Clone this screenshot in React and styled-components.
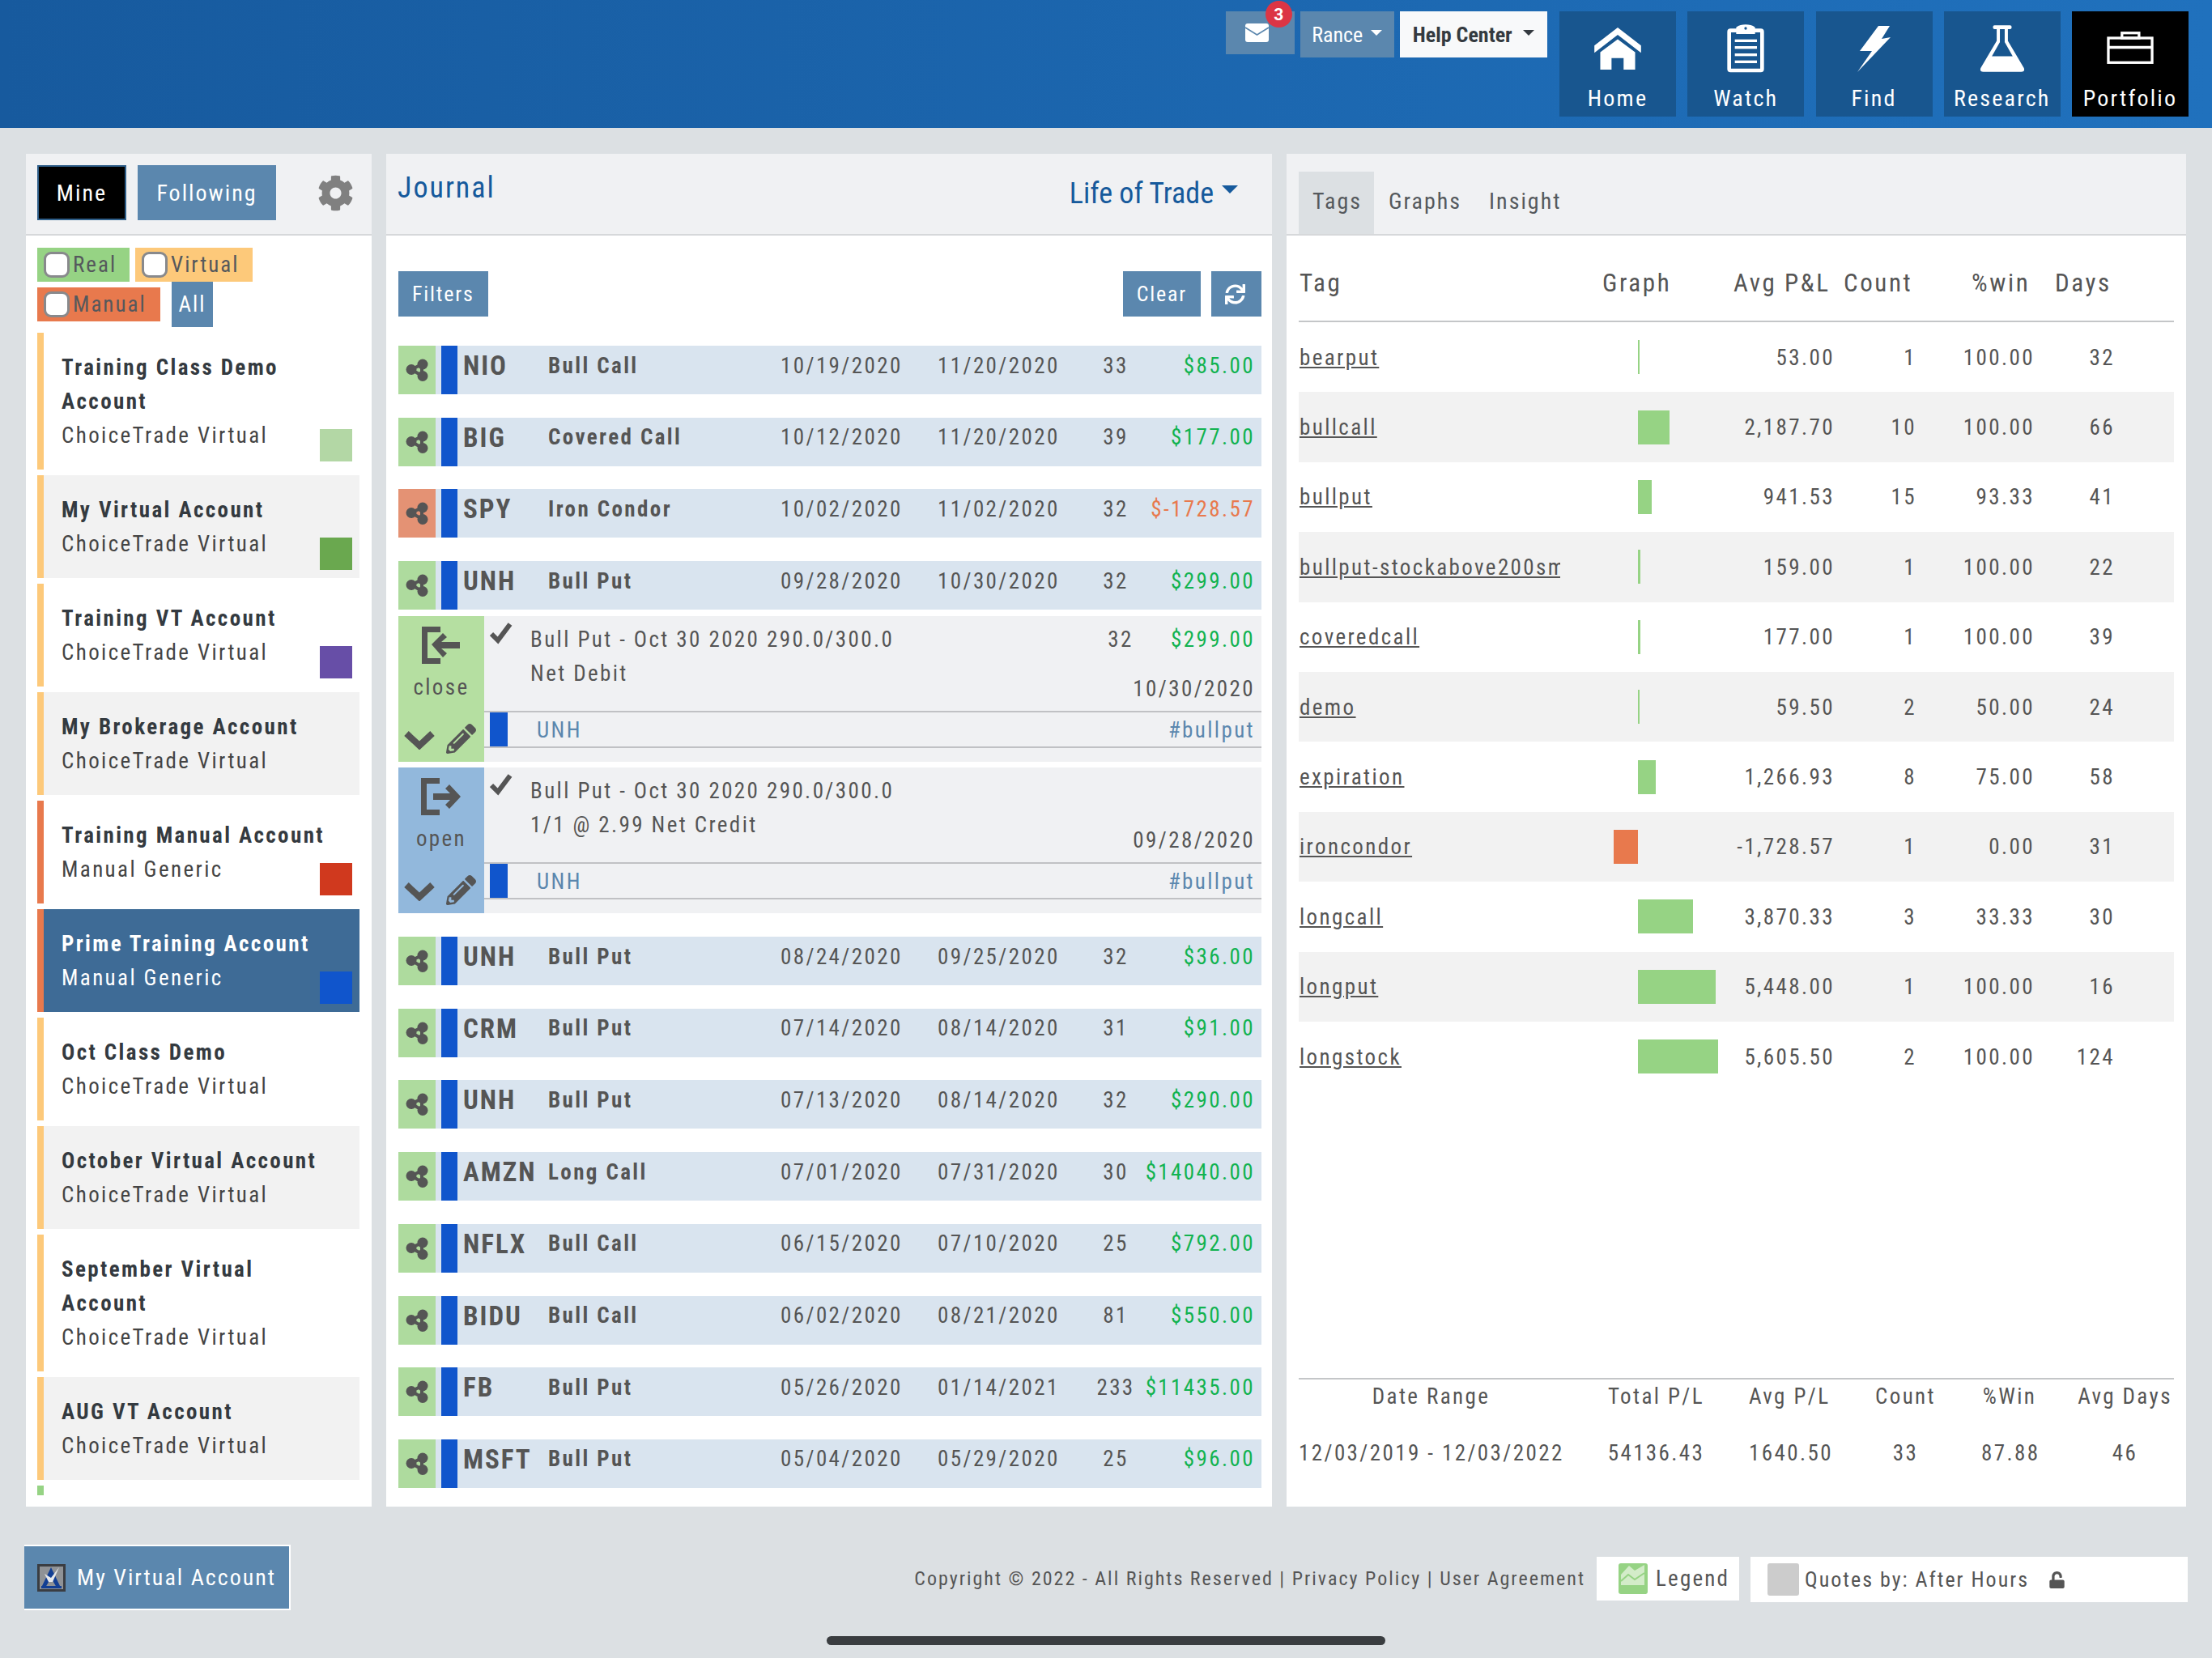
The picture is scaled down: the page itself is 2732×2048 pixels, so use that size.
import React from 'react';
import styled, { createGlobalStyle } from 'styled-components';
import { FaCog, FaPencilAlt, FaSync, FaUnlock } from 'react-icons/fa';

const GlobalStyle = createGlobalStyle`
	html, body { margin: 0; padding: 0; background: #dce0e3; }
	body {
		font-family: "Roboto Condensed", "Liberation Sans Narrow", Roboto, sans-serif;
		font-stretch: condensed;
		letter-spacing: 2.4px;
		color: #555;
	}
	* { box-sizing: border-box; }
`;

const accounts = [
	{ name: 'Training Class Demo Account', sub: 'ChoiceTrade Virtual', swatch: '#b3d7a5' },
	{ name: 'My Virtual Account', sub: 'ChoiceTrade Virtual', swatch: '#6aa84f' },
	{ name: 'Training VT Account', sub: 'ChoiceTrade Virtual', swatch: '#674ea7' },
	{ name: 'My Brokerage Account', sub: 'ChoiceTrade Virtual' },
	{ name: 'Training Manual Account', sub: 'Manual Generic', swatch: '#d0391e', kind: 'manual' },
	{ name: 'Prime Training Account', sub: 'Manual Generic', swatch: '#1055cc', kind: 'manual', active: true },
	{ name: 'Oct Class Demo', sub: 'ChoiceTrade Virtual' },
	{ name: 'October Virtual Account', sub: 'ChoiceTrade Virtual' },
	{ name: 'September Virtual Account', sub: 'ChoiceTrade Virtual' },
	{ name: 'AUG VT Account', sub: 'ChoiceTrade Virtual' },
];

const trades = [
	['NIO', 'Bull Call', '10/19/2020', '11/20/2020', '33', '$85.00'],
	['BIG', 'Covered Call', '10/12/2020', '11/20/2020', '39', '$177.00'],
	['SPY', 'Iron Condor', '10/02/2020', '11/02/2020', '32', '$-1728.57'],
	['UNH', 'Bull Put', '09/28/2020', '10/30/2020', '32', '$299.00', true],
];

const moreTrades = [
	['UNH', 'Bull Put', '08/24/2020', '09/25/2020', '32', '$36.00'],
	['CRM', 'Bull Put', '07/14/2020', '08/14/2020', '31', '$91.00'],
	['UNH', 'Bull Put', '07/13/2020', '08/14/2020', '32', '$290.00'],
	['AMZN', 'Long Call', '07/01/2020', '07/31/2020', '30', '$14040.00'],
	['NFLX', 'Bull Call', '06/15/2020', '07/10/2020', '25', '$792.00'],
	['BIDU', 'Bull Call', '06/02/2020', '08/21/2020', '81', '$550.00'],
	['FB', 'Bull Put', '05/26/2020', '01/14/2021', '233', '$11435.00'],
	['MSFT', 'Bull Put', '05/04/2020', '05/29/2020', '25', '$96.00'],
];

const tags = [
	['bearput', 53, '53.00', '1', '100.00', '32'],
	['bullcall', 2187.7, '2,187.70', '10', '100.00', '66'],
	['bullput', 941.53, '941.53', '15', '93.33', '41'],
	['bullput-stockabove200sma', 159, '159.00', '1', '100.00', '22'],
	['coveredcall', 177, '177.00', '1', '100.00', '39'],
	['demo', 59.5, '59.50', '2', '50.00', '24'],
	['expiration', 1266.93, '1,266.93', '8', '75.00', '58'],
	['ironcondor', -1728.57, '-1,728.57', '1', '0.00', '31'],
	['longcall', 3870.33, '3,870.33', '3', '33.33', '30'],
	['longput', 5448, '5,448.00', '1', '100.00', '16'],
	['longstock', 5605.5, '5,605.50', '2', '100.00', '124'],
];

const HomeIcon = () => (
	<svg width="58" height="52" viewBox="141 68 174 157" fill="#fff">
		<path d="M228 68 L315 135 L315 162 L228 95 L141 162 L141 135 Z" />
		<path d="M228 112 L293 160 L293 225 L250 225 L250 182 L205 182 L205 225 L163 225 L163 160 Z" />
	</svg>
);

const WatchIcon = () => (
	<svg width="46" height="60" viewBox="636 60 138 178" fill="#fff">
		<rect x="644" y="82" width="122" height="148" rx="5" fill="none" stroke="#fff" strokeWidth="14" />
		<path d="M670 95 L670 70 Q685 60 705 60 Q725 60 740 70 L740 95 Z" />
		<circle cx="705" cy="74" r="5" fill="#18568f" />
		<rect x="665" y="115" width="82" height="10" />
		<rect x="665" y="140" width="82" height="10" />
		<rect x="665" y="167" width="82" height="10" />
		<rect x="665" y="193" width="82" height="10" />
	</svg>
);

const FindIcon = () => (
	<svg width="44" height="58" viewBox="2292 30 44 58" fill="#fff">
		<path d="M2319 31 L2333 31 L2323 47 L2334 45 L2293 88 L2311 62 L2296 62 Z" />
	</svg>
);

const ResearchIcon = () => (
	<svg width="56" height="60" viewBox="368 60 170 178" fill="#fff">
		<rect x="418" y="62" width="70" height="14" rx="6" />
		<path
			fillRule="evenodd"
			d="M432 76 L432 120 L372 222 Q367 236 382 236 L524 236 Q539 236 534 222 L474 120 L474 76 Z M444 76 L444 125 L414 178 L492 178 L462 125 L462 76 Z"
		/>
	</svg>
);

const PortfolioIcon = () => (
	<svg width="58" height="41" viewBox="842 84 176 122" fill="none" stroke="#fff" strokeWidth="10">
		<rect x="848" y="107" width="164" height="92" />
		<rect x="899" y="88" width="64" height="19" />
		<path d="M848 142 H1012" />
	</svg>
);

const MailIcon = () => (
	<svg width="29" height="23" viewBox="0 0 29 23">
		<rect width="29" height="23" rx="3" fill="#fff" />
		<path d="M0 5 L14.5 14 L29 5" fill="none" stroke="#5b87ae" strokeWidth="1.6" />
	</svg>
);

const ShareIcon = () => (
	<svg width="28" height="28" viewBox="0 0 28 28" fill="#555">
		<path d="M7 13.5 L20 7 L20 21 Z" fill="none" stroke="#555" strokeWidth="4" />
		<circle cx="7" cy="13.5" r="6.5" />
		<circle cx="21" cy="7" r="6.5" />
		<circle cx="21" cy="21.5" r="6.5" />
	</svg>
);

const EnterIcon = () => (
	<svg width="48" height="46" viewBox="0 0 48 46" fill="#555">
		<path d="M0 0 H23 V7 H7 V39 H23 V46 H0 Z" />
		<path d="M12 22 L26 8 L31 13 L24 19 H47 V27 H24 L31 33 L26 38 Z" />
	</svg>
);

const ExitIcon = () => (
	<svg width="50" height="46" viewBox="0 0 50 46" fill="#555">
		<path d="M0 0 H23 V7 H7 V39 H23 V46 H0 Z" />
		<path d="M49 23 L35 8 L30 13 L36 19 H15 V27 H36 L30 33 L35 38 Z" />
	</svg>
);

const CheckIcon = () => (
	<svg width="28" height="28" viewBox="0 0 28 28" fill="none" stroke="#555" strokeWidth="6">
		<path d="M2 15 L10 23 L25 3" />
	</svg>
);

const ChevronIcon = () => (
	<svg width="38" height="26" viewBox="0 0 38 26" fill="none" stroke="#555" strokeWidth="8">
		<path d="M3 6 L19 21 L35 6" />
	</svg>
);

const LegendIcon = () => (
	<svg width="36" height="38" viewBox="0 0 36 38">
		<rect width="36" height="38" rx="3" fill="#96d384" />
		<path d="M3 14 L13 3 L20 9 L32 2 V27 H3 Z" fill="#d3ecc9" />
		<path d="M3 22 L12 14 L20 20 L32 12" fill="none" stroke="#96d384" strokeWidth="2" />
	</svg>
);

const LogoIcon = () => (
	<svg width="35" height="34" viewBox="0 0 35 34">
		<rect width="35" height="34" fill="#3a3d42" />
		<rect x="3" y="3" width="29" height="28" fill="#8f9296" />
		<path d="M17 4 L29 29 L24 29 L17 17 L10 29 L5 29 Z" fill="#123f94" />
		<path d="M9 12 L17 17 L27 4 L19 22 L14 22 Z" fill="#e6e8ea" />
		<rect x="5" y="27" width="25" height="3" fill="#123f94" />
	</svg>
);

const App = () => {
	const renderTrade = (t) => (
		<TradeRow key={t[0] + t[2]} $open={t[6]}>
			<StatusCell $loss={t[5].includes('-')}><ShareIcon /></StatusCell>
			<BlueBar />
			<Ticker>{t[0]}</Ticker>
			<Strategy>{t[1]}</Strategy>
			<DateCell>{t[2]}</DateCell>
			<DateCell>{t[3]}</DateCell>
			<DaysCell>{t[4]}</DaysCell>
			<Amount $loss={t[5].includes('-')}>{t[5]}</Amount>
		</TradeRow>
	);

	return (
		<>
			<GlobalStyle />
			<Page>
				<Header>
					<TopButtons>
						<MailButton>
							<MailIcon />
							<Badge>3</Badge>
						</MailButton>
						<UserButton>Rance<Caret /></UserButton>
						<HelpButton>Help Center<HelpCaret /></HelpButton>
					</TopButtons>
					<NavTile><TileIcon><HomeIcon /></TileIcon>Home</NavTile>
					<NavTile><TileIcon><WatchIcon /></TileIcon>Watch</NavTile>
					<NavTile><TileIcon><FindIcon /></TileIcon>Find</NavTile>
					<NavTile><TileIcon><ResearchIcon /></TileIcon>Research</NavTile>
					<NavTile $active><TileIcon><PortfolioIcon /></TileIcon>Portfolio</NavTile>
				</Header>

				<Main>
					<Panel>
						<PanelHead $left>
							<MineButton>Mine</MineButton>
							<FollowButton>Following</FollowButton>
							<GearSlot><FaCog /></GearSlot>
						</PanelHead>
						<Filters>
							<FilterRow>
								<Chip $bg="#96d384" $w={114}><Box />Real</Chip>
								<Chip $bg="#fdc97a" $w={145}><Box />Virtual</Chip>
							</FilterRow>
							<FilterRow $second>
								<Chip $bg="#e8794d" $w={152}><Box />Manual</Chip>
								<AllChip>All</AllChip>
							</FilterRow>
						</Filters>
						<AccountList>
							{accounts.map((a) => (
								<AccountCard key={a.name} $kind={a.kind} $active={a.active}>
									<AccountName $active={a.active}>{a.name}</AccountName>
									<div>{a.sub}</div>
									{a.swatch && <Swatch $bg={a.swatch} />}
								</AccountCard>
							))}
							<AccountStub />
						</AccountList>
					</Panel>

					<Panel>
						<PanelHead>
							<JournalTitle>Journal</JournalTitle>
							<LifeMenu>Life of Trade<LifeCaret /></LifeMenu>
						</PanelHead>
						<Toolbar>
							<BlueButton>Filters</BlueButton>
							<ToolbarRight>
								<BlueButton>Clear</BlueButton>
								<RefreshButton><FaSync /></RefreshButton>
							</ToolbarRight>
						</Toolbar>
						<TradeList>
							{trades.map(renderTrade)}
							<LegCard>
								<LegSide $bg="#b5dfa1">
									<EnterIcon />
									<LegLabel>close</LegLabel>
									<LegActions><ChevronIcon /><FaPencilAlt /></LegActions>
								</LegSide>
								<LegBody>
									<LegTop>
										<LegCheck><CheckIcon /></LegCheck>
										<LegLines>
											<LegLine>
												<span>Bull Put - Oct 30 2020 290.0/300.0</span>
												<LegDays>32</LegDays>
												<LegAmount>$299.00</LegAmount>
											</LegLine>
											<LegNote>
												<span>Net Debit</span>
												<LegDate>10/30/2020</LegDate>
											</LegNote>
										</LegLines>
									</LegTop>
									<LegTag>
										<LegBar />
										<LegSymbol>UNH</LegSymbol>
										<LegHash>#bullput</LegHash>
									</LegTag>
								</LegBody>
							</LegCard>
							<LegCard $last>
								<LegSide $bg="#92b8dc">
									<ExitIcon />
									<LegLabel>open</LegLabel>
									<LegActions><ChevronIcon /><FaPencilAlt /></LegActions>
								</LegSide>
								<LegBody>
									<LegTop>
										<LegCheck><CheckIcon /></LegCheck>
										<LegLines>
											<LegLine>
												<span>Bull Put - Oct 30 2020 290.0/300.0</span>
											</LegLine>
											<LegNote>
												<span>1/1 @ 2.99 Net Credit</span>
												<LegDate>09/28/2020</LegDate>
											</LegNote>
										</LegLines>
									</LegTop>
									<LegTag>
										<LegBar />
										<LegSymbol>UNH</LegSymbol>
										<LegHash>#bullput</LegHash>
									</LegTag>
								</LegBody>
							</LegCard>
							{moreTrades.map(renderTrade)}
						</TradeList>
					</Panel>

					<Panel>
						<PanelHead $tabs>
							<Tab $active>Tags</Tab>
							<Tab>Graphs</Tab>
							<Tab>Insight</Tab>
						</PanelHead>
						<TagsBody>
							<TagHead>
								<span>Tag</span>
								<span>Graph</span>
								<span>Avg P&amp;L</span>
								<span>Count</span>
								<span>%win</span>
								<span>Days</span>
							</TagHead>
							{tags.map((t) => (
								<TagRow key={t[0]}>
									<TagName>{t[0]}</TagName>
									<GraphCell>
										<NegSide>
											{t[1] < 0 && <GraphBar $loss style={{ width: -t[1] * 0.0176 }} />}
										</NegSide>
										{t[1] > 0 && <GraphBar style={{ width: Math.max(t[1] * 0.0176, 2) }} />}
									</GraphCell>
									<NumCell>{t[2]}</NumCell>
									<NumCell>{t[3]}</NumCell>
									<NumCell>{t[4]}</NumCell>
									<NumCell>{t[5]}</NumCell>
								</TagRow>
							))}
							<Summary>
								<SummaryCell>Date Range</SummaryCell>
								<SummaryCell>Total P/L</SummaryCell>
								<SummaryCell>Avg P/L</SummaryCell>
								<SummaryCell>Count</SummaryCell>
								<SummaryCell>%Win</SummaryCell>
								<SummaryLast>Avg Days</SummaryLast>
								<SummaryCell>12/03/2019 - 12/03/2022</SummaryCell>
								<SummaryCell>54136.43</SummaryCell>
								<SummaryCell>1640.50</SummaryCell>
								<SummaryCell>33</SummaryCell>
								<SummaryCell>87.88</SummaryCell>
								<SummaryLast>46</SummaryLast>
							</Summary>
						</TagsBody>
					</Panel>
				</Main>

				<Footer>
					<AccountButton><LogoIcon />My Virtual Account</AccountButton>
					<FooterRight>
						<Copyright>Copyright © 2022 - All Rights Reserved | Privacy Policy | User Agreement</Copyright>
						<LegendBox><LegendIcon />Legend</LegendBox>
						<QuotesBox>
							<GreySquare />
							<span>Quotes by: After Hours</span>
							<LockSlot><FaUnlock /></LockSlot>
						</QuotesBox>
					</FooterRight>
				</Footer>
				<HomeBar />
			</Page>
		</>
	);
};

const Page = styled.div`
	position: relative;
	width: 2732px;
	height: 2048px;
	overflow: hidden;
	background: #dce0e3;
`;

const Header = styled.header`
	height: 158px;
	padding: 14px 29px 0 0;
	display: flex;
	justify-content: flex-end;
	align-items: flex-start;
	gap: 14.25px;
	background: linear-gradient(to right, #175a9e, #2071bd);
`;

const TopButtons = styled.div`
	display: flex;
	align-items: flex-start;
	gap: 7px;
	margin-right: 1px;
`;

const MailButton = styled.div`
	position: relative;
	width: 85px;
	height: 53px;
	display: flex;
	align-items: center;
	justify-content: center;
	background: #5b87ae;
	svg {
		margin-right: 8px;
	}
`;

const Badge = styled.span`
	position: absolute;
	top: -13px;
	right: 3px;
	width: 33px;
	height: 33px;
	border-radius: 50%;
	background: #dc3545;
	color: #fff;
	font-family: Roboto, sans-serif;
	font-stretch: normal;
	font-size: 21px;
	font-weight: 700;
	letter-spacing: 0;
	display: flex;
	align-items: center;
	justify-content: center;
`;

const Caret = styled.i`
	display: inline-block;
	margin-left: 10px;
	margin-bottom: 5px;
	border-top: 7px solid currentColor;
	border-left: 7px solid transparent;
	border-right: 7px solid transparent;
`;

const HelpCaret = styled(Caret)`
	margin-left: 13px;
`;

const UserButton = styled.div`
	width: 116px;
	height: 57px;
	display: flex;
	align-items: center;
	justify-content: center;
	background: #5b87ae;
	color: #fff;
	font-size: 26px;
	letter-spacing: 0;
`;

const HelpButton = styled(UserButton)`
	width: 182px;
	background: #f8f9fa;
	color: #343a40;
	font-weight: 700;
`;

const NavTile = styled.div`
	width: 144px;
	height: 130px;
	display: flex;
	flex-direction: column;
	align-items: center;
	color: #fff;
	font-size: 28px;
	line-height: 40px;
	letter-spacing: 2.2px;
	background: ${(p) => (p.$active ? '#000' : '#18568f')};
`;

const TileIcon = styled.div`
	height: 88px;
	padding-top: 3px;
	display: flex;
	align-items: center;
	justify-content: center;
`;

const Main = styled.main`
	display: grid;
	grid-template-columns: 427px 1094px 1111px;
	gap: 18px;
	padding: 32px 0 0 32px;
	height: 1703px;
`;

const Panel = styled.section`
	height: 1671px;
	display: flex;
	flex-direction: column;
	overflow: hidden;
	background: #fff;
`;

const PanelHead = styled.div`
	flex: none;
	height: 101px;
	display: flex;
	align-items: ${(p) => (p.$tabs ? 'flex-end' : 'center')};
	padding: ${(p) => (p.$tabs ? '0 0 0 15px' : '0 14px')};
	background: #f0f1f3;
	border-bottom: 2px solid #d6d8da;
	${(p) => (p.$left ? 'padding-bottom: 3px;' : '')}
`;

const MineButton = styled.div`
	width: 110px;
	height: 68px;
	display: flex;
	align-items: center;
	justify-content: center;
	background: #000;
	border: 2px solid #2f5f8a;
	color: #fff;
	font-size: 28px;
	letter-spacing: 2px;
`;

const FollowButton = styled(MineButton)`
	width: 171px;
	margin-left: 14px;
	background: #5b87ae;
	border: 0;
`;

const GearSlot = styled.div`
	margin-left: auto;
	margin-right: 8px;
	font-size: 45px;
	line-height: 0;
	color: #808080;
`;

const Filters = styled.div`
	flex: none;
	padding: 15px 14px 7px;
`;

const FilterRow = styled.div`
	display: flex;
	align-items: flex-start;
	gap: ${(p) => (p.$second ? '14px' : '7px')};
	height: ${(p) => (p.$second ? '56px' : '42px')};
	${(p) => (p.$second ? '> div:first-child { margin-top: 7px; }' : '')}
`;

const Chip = styled.div`
	width: ${(p) => p.$w}px;
	height: 42px;
	display: flex;
	align-items: center;
	padding-left: 8px;
	background: ${(p) => p.$bg};
	color: #55585c;
	font-size: 27px;
	letter-spacing: 2px;
`;

const Box = styled.i`
	width: 32px;
	height: 32px;
	margin-right: 4px;
	border: 3px solid #88898c;
	border-radius: 9px;
	background: #fff;
`;

const AllChip = styled.div`
	width: 51px;
	height: 56px;
	display: flex;
	align-items: center;
	justify-content: center;
	background: #5b87ae;
	color: #fff;
	font-size: 27px;
	letter-spacing: 2px;
`;

const AccountList = styled.div`
	height: 1436px;
	padding: 0 15px 0 14px;
	overflow: hidden;
`;

const AccountCard = styled.div`
	position: relative;
	margin-bottom: 7px;
	padding: 22px 28px 21px 22px;
	border-left: 8px solid ${(p) => (p.$kind === 'manual' ? '#e8794d' : '#fdc97a')};
	background: ${(p) => (p.$active ? '#3e6b96' : 'transparent')};
	color: ${(p) => (p.$active ? '#fff' : '#444')};
	font-size: 27px;
	line-height: 42px;
	&:nth-child(even) {
		background: ${(p) => (p.$active ? '#3e6b96' : '#f2f2f2')};
	}
`;

const AccountStub = styled.div`
	height: 40px;
	border-left: 8px solid #96d384;
`;

const AccountName = styled.div`
	font-weight: 700;
	color: ${(p) => (p.$active ? '#fff' : '#343a40')};
`;

const Swatch = styled.i`
	position: absolute;
	right: 9px;
	bottom: 10px;
	width: 40px;
	height: 40px;
	background: ${(p) => p.$bg};
`;

const JournalTitle = styled.div`
	color: #165a9c;
	font-size: 36px;
	letter-spacing: 2px;
	margin-bottom: 15px;
`;

const LifeMenu = styled.div`
	margin-left: auto;
	margin-right: 28px;
	color: #165a9c;
	font-size: 36px;
	letter-spacing: 0;
	display: flex;
	align-items: center;
	margin-bottom: 2px;
`;

const LifeCaret = styled.i`
	margin-left: 10px;
	margin-bottom: 10px;
	border-top: 10px solid #165a9c;
	border-left: 10px solid transparent;
	border-right: 10px solid transparent;
`;

const Toolbar = styled.div`
	flex: none;
	display: flex;
	justify-content: space-between;
	padding: 44px 13px 36px 15px;
`;

const ToolbarRight = styled.div`
	display: flex;
	gap: 13px;
`;

const BlueButton = styled.div`
	height: 56px;
	padding: 0 17px;
	display: flex;
	align-items: center;
	background: #5b87ae;
	color: #fff;
	font-size: 26px;
	letter-spacing: 1.8px;
`;

const RefreshButton = styled(BlueButton)`
	width: 62px;
	padding: 0 3px 0 0;
	justify-content: center;
	font-size: 25px;
`;

const TradeList = styled.div`
	padding: 0 13px 0 15px;
`;

const TradeRow = styled.div`
	height: 60px;
	margin-bottom: ${(p) => (p.$open ? '8px' : '28.7px')};
	display: flex;
	align-items: center;
	background: #d9e4ef;
	color: #555;
	font-size: 27px;
`;

const StatusCell = styled.div`
	align-self: stretch;
	width: 46px;
	display: flex;
	align-items: center;
	justify-content: center;
	background: ${(p) => (p.$loss ? '#e49274' : '#aedb9e')};
`;

const BlueBar = styled.div`
	align-self: stretch;
	width: 20px;
	margin-left: 7px;
	background: #1055cc;
`;

const Ticker = styled.div`
	width: 104px;
	margin-left: 7px;
	margin-right: 1px;
	margin-bottom: 11px;
	font-size: 33px;
	font-weight: 700;
	letter-spacing: 2px;
`;

const Strategy = styled.div`
	width: 287px;
	margin-bottom: 11px;
	font-weight: 700;
`;

const DateCell = styled.div`
	width: 194px;
	margin-bottom: 11px;
`;

const DaysCell = styled.div`
	width: 52px;
	margin-bottom: 11px;
	text-align: center;
`;

const Amount = styled.div`
	flex: 1;
	margin-bottom: 11px;
	padding-right: 8px;
	text-align: right;
	color: ${(p) => (p.$loss ? '#e8794d' : '#12b350')};
`;

const LegCard = styled.div`
	height: 180px;
	margin-bottom: ${(p) => (p.$last ? '29px' : '7px')};
	display: flex;
`;

const LegSide = styled.div`
	flex: none;
	position: relative;
	width: 106px;
	padding-top: 13px;
	display: flex;
	flex-direction: column;
	align-items: center;
	background: ${(p) => p.$bg};
	svg {
		flex: none;
	}
`;

const LegLabel = styled.div`
	margin-top: 11px;
	font-size: 27px;
	line-height: 36px;
`;

const LegActions = styled.div`
	position: absolute;
	bottom: 10px;
	left: 7px;
	right: 10px;
	display: flex;
	align-items: center;
	justify-content: space-between;
	font-size: 37px;
	line-height: 0;
`;

const LegBody = styled.div`
	flex: 1;
	display: flex;
	flex-direction: column;
	background: #f0f1f3;
`;

const LegTop = styled.div`
	height: 119px;
	display: flex;
	border-bottom: 2px solid #c0c1c4;
`;

const LegCheck = styled.div`
	width: 57px;
	padding: 7px 0 0 7px;
	line-height: 0;
`;

const LegLines = styled.div`
	flex: 1;
	padding: 8px 8px 0 0;
	font-size: 27px;
	line-height: 42px;
`;

const LegLine = styled.div`
	display: flex;
	height: 42px;
`;

const LegDays = styled.span`
	margin-left: auto;
	width: 102px;
	text-align: center;
`;

const LegAmount = styled.span`
	width: 115px;
	text-align: right;
	color: #12b350;
`;

const LegNote = styled.div`
	display: flex;
	justify-content: space-between;
`;

const LegDate = styled.span`
	margin-top: 19px;
`;

const LegTag = styled.div`
	height: 44px;
	display: flex;
	align-items: center;
	padding: 0 8px 0 7px;
	border-bottom: 2px solid #c0c1c4;
	color: #5b87ae;
	font-size: 27px;
	line-height: 44px;
`;

const LegBar = styled.i`
	align-self: stretch;
	width: 22px;
	background: #1055cc;
`;

const LegSymbol = styled.span`
	margin-left: 36px;
	padding-top: 2px;
`;

const LegHash = styled.span`
	margin-left: auto;
	padding-top: 2px;
`;

const Tab = styled.div`
	height: 77px;
	padding: 0 ${(p) => (p.$active ? '15px' : '16px')} 5px ${(p) => (p.$active ? '17px' : '16px')};
	display: flex;
	align-items: center;
	margin-right: 2px;
	background: ${(p) => (p.$active ? '#dce0e3' : 'transparent')};
	font-size: 28px;
	letter-spacing: 2px;
	color: #55595d;
`;

const TagsBody = styled.div`
	flex: 1;
	display: flex;
	flex-direction: column;
	padding: 0 15px;
`;

const TagHead = styled.div`
	flex: none;
	height: 107px;
	padding: 12px 0 0 1px;
	display: grid;
	grid-template-columns: 374px 162px 136px 158px 103px 1fr;
	align-items: center;
	border-bottom: 2px solid #c4c6c8;
	font-size: 31px;
	letter-spacing: 2.6px;
`;

const TagRow = styled.div`
	flex: none;
	height: 86.4px;
	display: grid;
	grid-template-columns: 323px 217px 122px 101px 146px 99px;
	align-items: center;
	font-size: 27px;
	&:nth-child(odd) {
		background: #f2f2f2;
	}
`;

const TagName = styled.div`
	overflow: hidden;
	white-space: nowrap;
	padding-top: 1px;
	padding-left: 1px;
	text-decoration: underline;
`;

const GraphCell = styled.div`
	display: flex;
	align-items: center;
`;

const NegSide = styled.div`
	width: 96px;
	display: flex;
	justify-content: flex-end;
`;

const GraphBar = styled.i`
	height: 42px;
	background: ${(p) => (p.$loss ? '#e8794d' : '#96d384')};
`;

const NumCell = styled.div`
	padding-top: 1px;
	text-align: right;
`;

const Summary = styled.div`
	margin-top: auto;
	height: 159px;
	display: grid;
	grid-template-columns: 327px 229px 100px 187px 70px 168px;
	grid-template-rows: 42px 98px;
	align-content: start;
	border-top: 2px solid #c4c6c8;
	align-items: center;
	font-size: 27px;
`;

const SummaryCell = styled.div`
	text-align: center;
	white-space: nowrap;
`;

const SummaryLast = styled(SummaryCell)`
	padding-left: 47px;
`;

const Footer = styled.footer`
	height: 187px;
	padding: 15px 30px 0;
	display: flex;
	align-items: flex-start;
	justify-content: space-between;
`;

const AccountButton = styled.div`
	width: 329px;
	height: 81px;
	margin-top: 32px;
	padding-left: 16px;
	display: flex;
	align-items: center;
	gap: 14px;
	background: #5b87ae;
	border: solid #fff;
	border-width: 2px 2px 2px 0;
	color: #fff;
	font-size: 28px;
	letter-spacing: 2px;
`;

const FooterRight = styled.div`
	margin-top: 47px;
	display: flex;
	align-items: flex-start;
`;

const Copyright = styled.div`
	margin: 12px 14px 0 0;
	font-size: 24px;
	line-height: 30px;
	letter-spacing: 2px;
`;

const LegendBox = styled.div`
	width: 176px;
	height: 54px;
	padding-left: 27px;
	display: flex;
	align-items: center;
	gap: 10px;
	background: #fff;
	font-size: 27px;
	letter-spacing: 2.2px;
`;

const QuotesBox = styled.div`
	width: 540px;
	height: 56px;
	margin-left: 14px;
	padding-left: 21px;
	display: flex;
	align-items: center;
	gap: 7px;
	background: #fff;
	font-size: 26px;
	letter-spacing: 2px;
`;

const GreySquare = styled.i`
	width: 39px;
	height: 40px;
	border-radius: 3px;
	background: #ccc;
`;

const LockSlot = styled.span`
	margin-left: 17px;
	font-size: 21px;
	line-height: 0;
`;

const HomeBar = styled.div`
	position: absolute;
	left: 1021px;
	bottom: 16px;
	width: 690px;
	height: 11px;
	border-radius: 6px;
	background: #3a3d40;
`;

export default App;
